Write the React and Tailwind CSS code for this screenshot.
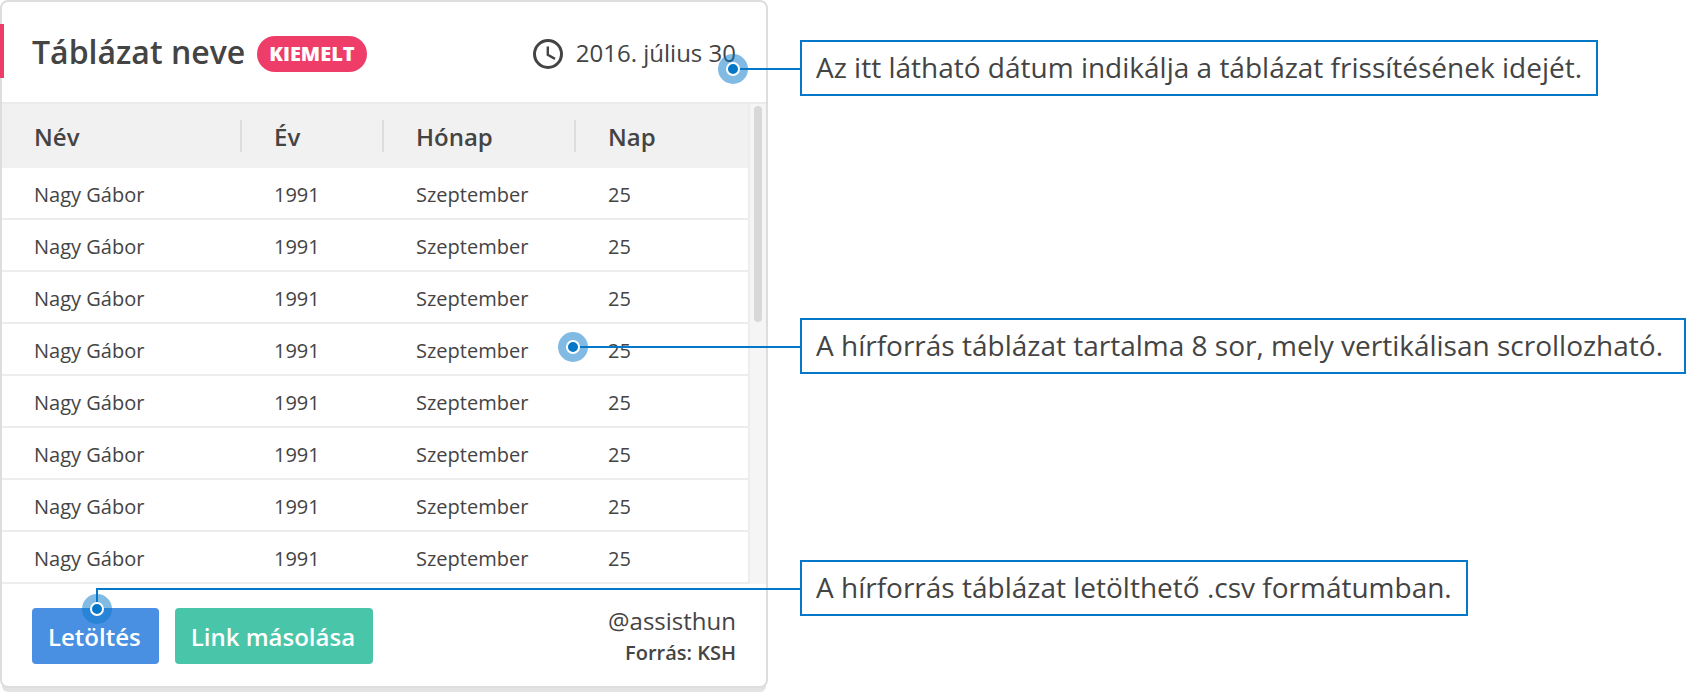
const rows = Array.from({ length: 8 }, () => ({
  name: "Nagy Gábor",
  year: "1991",
  month: "Szeptember",
  day: "25",
}));

const columns = ["Név", "Év", "Hónap", "Nap"];

function ClockIcon() {
  return (
    <svg viewBox="0 0 30 30" className="size-[30px] shrink-0" fill="none" stroke="#444" aria-hidden="true">
      <circle cx="15" cy="15" r="13.5" strokeWidth="3" />
      <path d="M14.8 7.5v8.2l7.2 4.2" strokeWidth="2.4" />
    </svg>
  );
}

function Marker({ className }) {
  return (
    <svg viewBox="0 0 30 30" className={`absolute size-[30px] ${className}`} aria-hidden="true">
      <circle cx="15" cy="15" r="15" fill="#0477c9" fillOpacity="0.5" />
      <circle cx="15" cy="15" r="6" fill="#0477c9" stroke="#fff" strokeWidth="2" />
    </svg>
  );
}

function Note({ className = "", children, text }) {
  return (
    <div className={`relative flex h-14 max-w-full items-center border-2 border-[#0477c9] bg-white px-3.5 pb-0.5 ${className}`}>
      {children}
      <p className="text-[28px] leading-9 whitespace-nowrap">{text}</p>
    </div>
  );
}

function TableCard() {
  return (
    <section className="relative rounded-lg border-2 border-[#ddd] bg-white shadow-[0_6px_0_-2px_#e3e3e3]">
      <span className="absolute top-[22px] -left-0.5 h-[54px] w-1 bg-[#ee3d68]" />

      <header className="flex h-[100px] items-center justify-between px-[30px] pt-1">
        <div className="flex items-center gap-3">
          <h1 className="pb-1 text-[32px] leading-10 font-semibold">Táblázat neve</h1>
          <span className="flex h-9 items-center rounded-full bg-[#ee3d68] px-3 text-[20px] leading-6 font-extrabold text-white">
            KIEMELT
          </span>
        </div>
        <div className="flex items-center gap-[13px]">
          <ClockIcon />
          <time dateTime="2016-07-30" className="pb-0.5 text-[24px] leading-8">2016. július 30</time>
        </div>
      </header>

      <div className="flex border-t-2 border-[#ebebeb]">
        <table className="flex-1 table-fixed border-separate border-spacing-0 text-left">
          <colgroup>
            <col className="w-[240px]" />
            <col className="w-[142px]" />
            <col className="w-[192px]" />
            <col />
          </colgroup>
          <thead>
            <tr className="h-16 bg-[#f1f1f1]">
              {columns.map((c, i) => (
                <th key={c} scope="col" className="p-0 text-[24px] leading-[30px] font-semibold">
                  <div className={i < 3 ? "border-r-2 border-[#ddd] pt-0.5 pl-8" : "pt-0.5 pl-8"}>{c}</div>
                </th>
              ))}
            </tr>
          </thead>
          <tbody>
            {rows.map((r, i) => (
              <tr key={i} className="h-[52px] text-[20px] leading-7">
                <td className="border-b-2 border-[#ededed] p-0 pt-1 pl-8">{r.name}</td>
                <td className="border-b-2 border-[#ededed] p-0 pt-1 pl-8">{r.year}</td>
                <td className="border-b-2 border-[#ededed] p-0 pt-1 pl-8">{r.month}</td>
                <td className="border-b-2 border-[#ededed] p-0 pt-1 pl-8">{r.day}</td>
              </tr>
            ))}
          </tbody>
        </table>
        <div className="w-[18px] border-l-2 border-[#ededed] bg-[#f5f5f5] px-1 pt-0.5" aria-hidden="true">
          <div className="h-[216px] w-2 rounded-full bg-[#d8d8d8]" />
        </div>
      </div>

      <footer className="flex h-[102px] items-center justify-between px-[30px] pt-0.5">
        <div className="flex gap-4">
          <button type="button" className="h-14 rounded bg-[#4a90e2] pt-0.5 pr-[18px] pl-4 text-[24px] leading-8 font-semibold text-white">
            Letöltés
          </button>
          <button type="button" className="h-14 rounded bg-[#49c5a9] pt-0.5 pr-[18px] pl-4 text-[24px] leading-8 font-semibold text-white">
            Link másolása
          </button>
        </div>
        <div className="flex flex-col gap-0.5 text-right">
          <p className="text-[24px] leading-8">@assisthun</p>
          <p className="text-[20px] leading-7 font-semibold">Forrás: KSH</p>
        </div>
      </footer>
    </section>
  );
}

export default function App() {
  return (
    <main className="grid grid-cols-[minmax(0,768px)_minmax(0,1fr)] items-start gap-8 overflow-hidden bg-white pb-1 font-['Open_Sans','Noto_Sans',sans-serif] text-[#444]">
      <TableCard />
      <aside className="flex flex-col items-start pt-10">
        <Note text="Az itt látható dátum indikálja a táblázat frissítésének idejét.">
          <Marker className="top-[12px] right-[calc(100%+54px)]" />
          <span className="absolute top-[26px] right-full h-0.5 w-[62px] bg-[#0477c9]" />
        </Note>
        <Note
          className="mt-[222px] w-full"
          text="A hírforrás táblázat tartalma 8 sor, mely vertikálisan scrollozható."
        >
          <Marker className="top-[12px] right-[calc(100%+214px)]" />
          <span className="absolute top-[26px] right-full h-0.5 w-[222px] bg-[#0477c9]" />
        </Note>
        <Note className="mt-[186px]" text="A hírforrás táblázat letölthető .csv formátumban.">
          <Marker className="top-8 right-[calc(100%+690px)]" />
          <span className="absolute top-[26px] right-full h-3.5 w-[706px] border-t-2 border-l-2 border-[#0477c9]" />
        </Note>
      </aside>
    </main>
  );
}
